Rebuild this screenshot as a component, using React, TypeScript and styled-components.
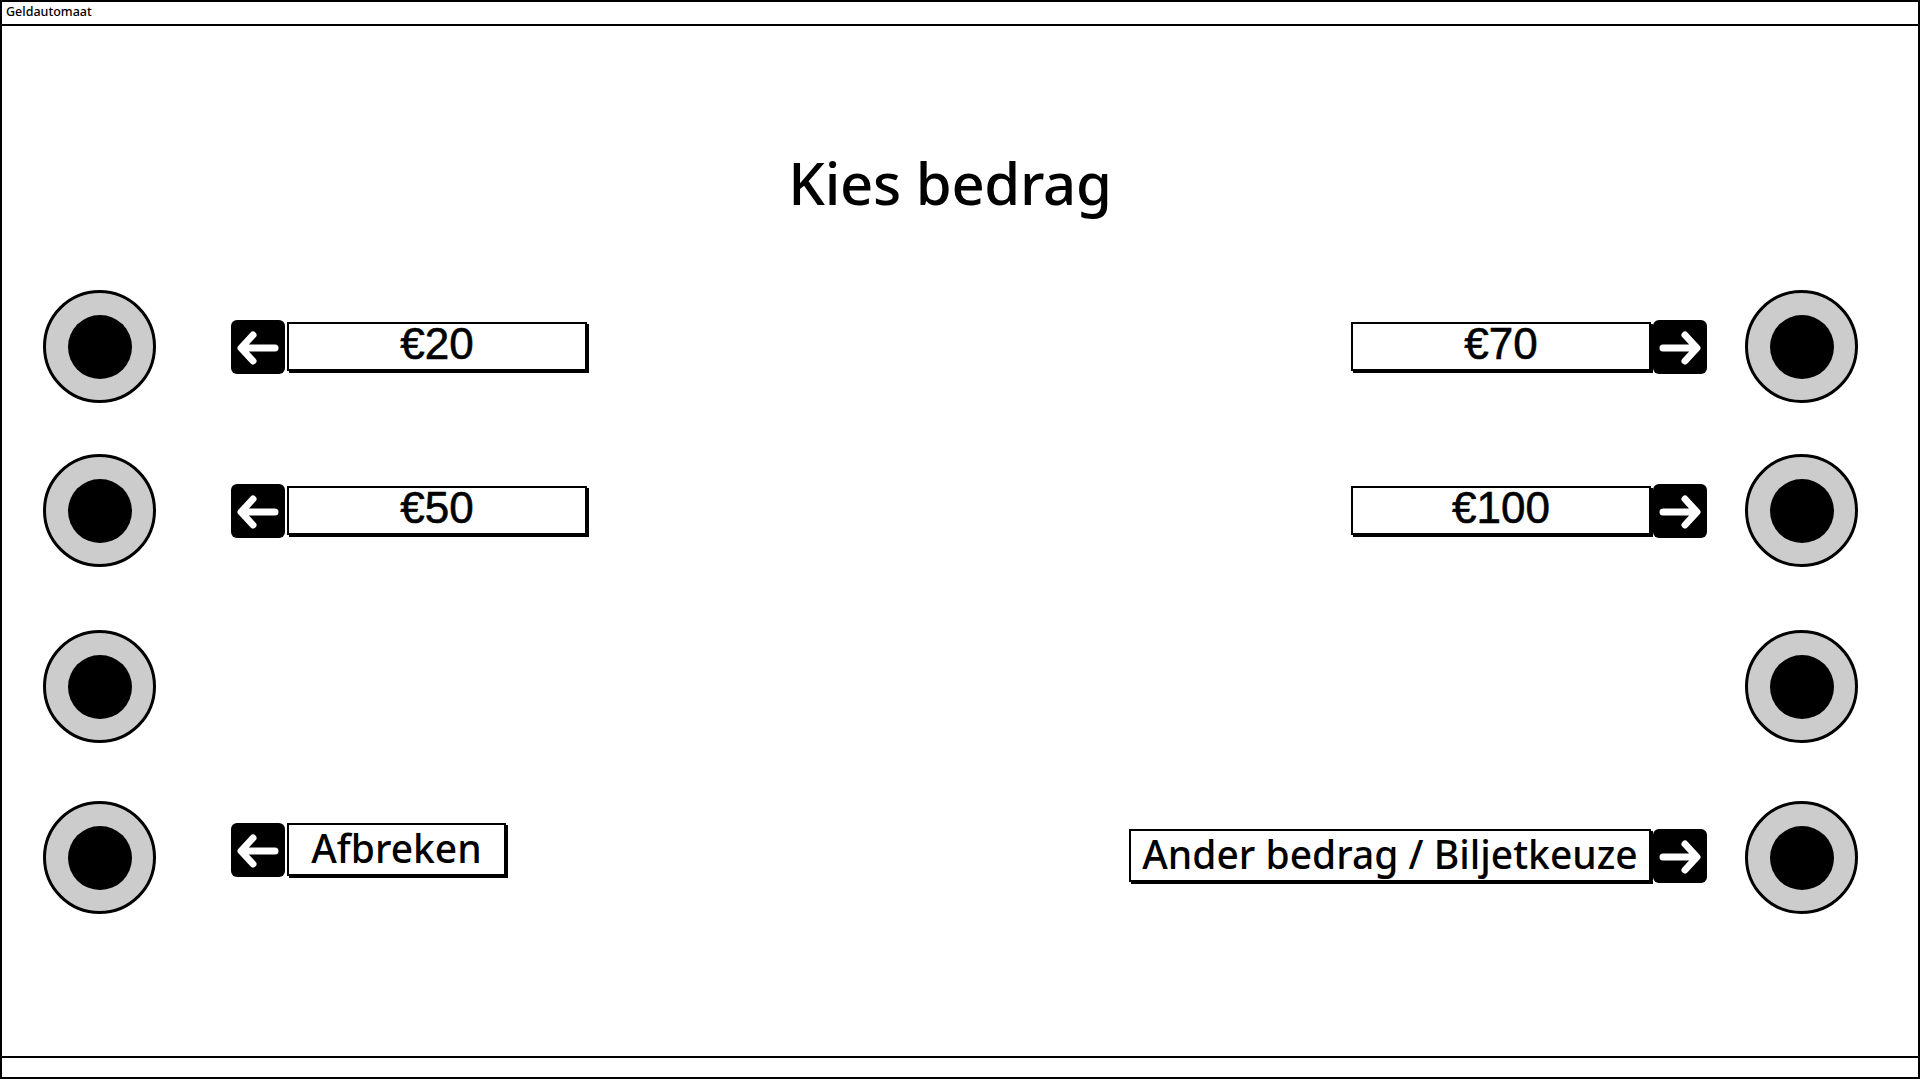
import React from "react";
import styled, { createGlobalStyle } from "styled-components";

const Global = createGlobalStyle`
  html, body { margin: 0; padding: 0; background: #ffffff; }
  * { box-sizing: border-box; }
  body { font-family: "Noto Sans", "DejaVu Sans", sans-serif; color: #000; }
`;

const Window = styled.div`
  width: 1920px;
  height: 1079px;
  border: 2px solid #000;
  display: flex;
  flex-direction: column;
  background: #fff;
`;

const TitleBar = styled.div`
  height: 24px;
  flex: none;
  border-bottom: 2px solid #000;
  padding-left: 4px;
  font-size: 12.5px;
  font-weight: 500;
  line-height: 20px;
  white-space: nowrap;
`;

const Content = styled.div`
  flex: 1;
  display: flex;
  flex-direction: column;
`;

const Heading = styled.h1`
  margin: 122px 0 0 0;
  padding-right: 20px;
  text-align: center;
  font-family: "Noto Sans", sans-serif;
  font-weight: 500;
  font-size: 58px;
  line-height: 70px;
  letter-spacing: -0.3px;
`;

const Rows = styled.div`
  display: flex;
  flex-direction: column;
  padding: 0 60px 0 41px;
`;

const Row = styled.div<{ $gap: number }>`
  display: flex;
  align-items: center;
  justify-content: space-between;
  height: 113px;
  margin-top: ${(p) => p.$gap}px;
`;

const Side = styled.div<{ $gap: number }>`
  display: flex;
  align-items: center;
  gap: ${(p) => p.$gap}px;
`;

const Knob = styled.div`
  width: 113px;
  height: 113px;
  border-radius: 50%;
  background: #cccccc;
  border: 3px solid #000;
  display: flex;
  align-items: center;
  justify-content: center;
  flex: none;
  &::after {
    content: "";
    width: 64px;
    height: 64px;
    border-radius: 50%;
    background: #000;
  }
`;

const Button = styled.div<{ $lift?: number }>`
  display: flex;
  align-items: center;
  margin-bottom: ${(p) => (p.$lift ?? 0) * 2}px;
`;

const ArrowBox = styled.div`
  width: 54px;
  height: 54px;
  background: #000;
  border-radius: 6px;
  flex: none;
  display: flex;
  align-items: center;
  justify-content: center;
`;

const Label = styled.div<{ $width: number; $height: number; $mono?: boolean }>`
  width: ${(p) => p.$width}px;
  height: ${(p) => p.$height}px;
  border: 2px solid #000;
  box-shadow: 2px 2px 0 #000;
  background: #fff;
  margin: 0 2px;
  display: flex;
  align-items: center;
  justify-content: center;
  white-space: nowrap;
  font-family: ${(p) =>
    p.$mono ? `"Liberation Sans", Arial, sans-serif` : `"Noto Sans", sans-serif`};
  font-size: ${(p) => (p.$mono ? 44 : 39)}px;
  font-weight: ${(p) => (p.$mono ? 400 : 500)};
  -webkit-text-stroke: ${(p) => (p.$mono ? "0.6px #000" : "0")};
  line-height: 1;
  padding-bottom: 5px;
`;

const StatusBar = styled.div`
  margin-top: auto;
  height: 21px;
  flex: none;
  border-top: 2px solid #000;
`;

const Arrow: React.FC<{ dir: "left" | "right" }> = ({ dir }) => (
  <svg
    width="54"
    height="54"
    viewBox="0 0 54 54"
    style={dir === "right" ? { transform: "scaleX(-1)" } : undefined}
  >
    <path
      d="M44 28 H11 M22 15 L10 28 L22 41"
      fill="none"
      stroke="#fff"
      strokeWidth="7"
      strokeLinecap="round"
      strokeLinejoin="round"
    />
  </svg>
);

type BtnProps = { text: string; width: number; height: number; mono?: boolean; lift?: number };

const LeftButton: React.FC<BtnProps> = ({ text, width, height, mono, lift }) => (
  <Button $lift={lift}>
    <ArrowBox>
      <Arrow dir="left" />
    </ArrowBox>
    <Label $width={width} $height={height} $mono={mono}>
      {text}
    </Label>
  </Button>
);

const RightButton: React.FC<BtnProps> = ({ text, width, height, mono, lift }) => (
  <Button $lift={lift}>
    <Label $width={width} $height={height} $mono={mono}>
      {text}
    </Label>
    <ArrowBox>
      <Arrow dir="right" />
    </ArrowBox>
  </Button>
);

export default function App() {
  return (
    <>
      <Global />
      <Window>
        <TitleBar>Geldautomaat</TitleBar>
        <Content>
          <Heading>Kies bedrag</Heading>
          <Rows>
            <Row $gap={72}>
              <Side $gap={75}>
                <Knob />
                <LeftButton text="€20" width={300} height={49} mono />
              </Side>
              <Side $gap={38}>
                <RightButton text="€70" width={300} height={49} mono />
                <Knob />
              </Side>
            </Row>
            <Row $gap={51}>
              <Side $gap={75}>
                <Knob />
                <LeftButton text="€50" width={300} height={49} mono />
              </Side>
              <Side $gap={38}>
                <RightButton text="€100" width={300} height={49} mono />
                <Knob />
              </Side>
            </Row>
            <Row $gap={63}>
              <Side $gap={75}>
                <Knob />
              </Side>
              <Side $gap={38}>
                <Knob />
              </Side>
            </Row>
            <Row $gap={58}>
              <Side $gap={75}>
                <Knob />
                <LeftButton text="Afbreken" width={219} height={53} lift={8} />
              </Side>
              <Side $gap={38}>
                <RightButton text="Ander bedrag / Biljetkeuze" width={522} height={53} lift={2} />
                <Knob />
              </Side>
            </Row>
          </Rows>
          <StatusBar />
        </Content>
      </Window>
    </>
  );
}
